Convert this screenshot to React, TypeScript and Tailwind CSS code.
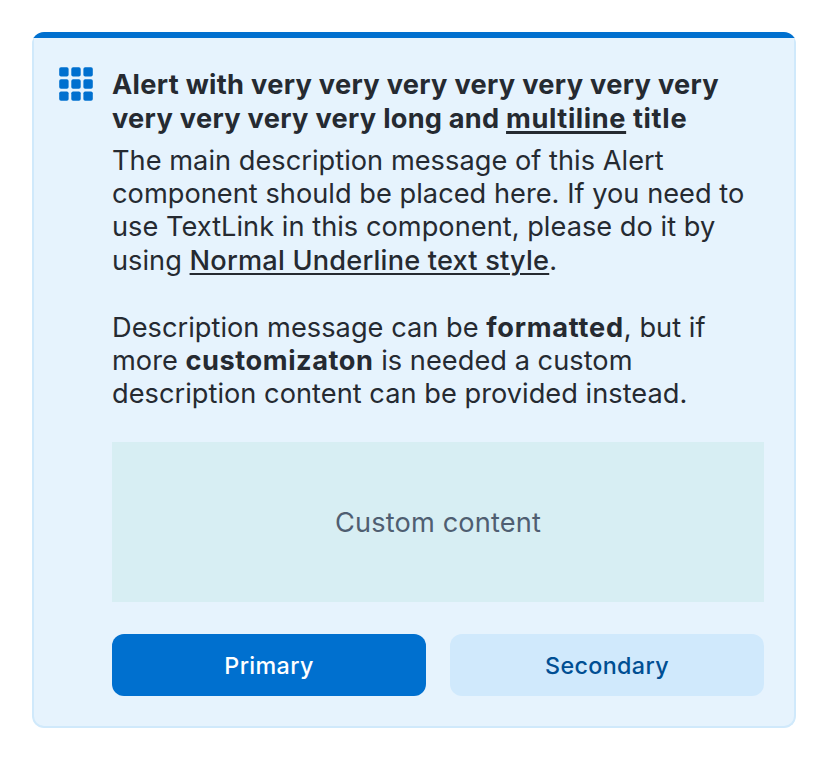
const cells = [0.2, 12.3, 24.4];

function GridIcon() {
  return (
    <svg className="mt-[29px] h-[34px] w-[34px] shrink-0" viewBox="0 0 34 34" fill="#0070cf">
      {cells.map((y) => cells.map((x) => <rect key={`${x}-${y}`} x={x} y={y} width="9.4" height="9.4" rx="1.8" />))}
    </svg>
  );
}

export default function App() {
  return (
    <main className="h-[761px] w-[828px] bg-white p-8 font-['Inter',sans-serif] text-[#252a31]">
      <section className="flex h-[696px] w-[764px] flex-col overflow-hidden rounded-xl bg-[#e6f3fd]">
        <div className="h-1.5 shrink-0 bg-[#0070cf]" />
        <div className="flex flex-1 rounded-b-xl border-x-2 border-b-2 border-[#d0e9fb] pl-[25px]">
          <GridIcon />
          <div className="ml-[19px] w-[652px] pt-[30px]">
            <h1 className="text-[27.2px] font-bold leading-[34px] tracking-[0.3px] whitespace-nowrap">
              <span className="block">Alert with very very very very very very very</span>
              <span className="block">very very very very <span className="tracking-[0.2px]">long and</span> <a className="tracking-[0.6px] underline decoration-[3px] underline-offset-[3px]">multiline</a> <span className="tracking-[0.7px]">title</span></span>
            </h1>
            <div className="mt-[7.5px] text-[27.2px] leading-[33.4px] tracking-[0.03px] whitespace-nowrap">
              <p>The main description message of this Alert<br />component should be placed here. If you need to<br />use TextLink in this component, please do it by<br />using <a className="font-medium tracking-[0.19px] underline decoration-2 underline-offset-[3px]">Normal Underline text style</a>.</p>
              <p className="mt-[33.4px]">Description message can be <b className="tracking-[0.75px]">formatted</b>, but if<br />more <b className="tracking-[0.55px]">customizaton</b> is needed a custom<br />description content can be provided instead.</p>
            </div>
            <div className="mt-[31.3px] flex h-40 items-center justify-center bg-[#d7eef3] pt-0.5 text-[27.2px] tracking-[0.13px] text-[#4f5e71]">Custom content</div>
            <div className="mt-8 grid grid-cols-2 gap-6 text-[23.3px] font-medium tracking-[0.35px]">
              <button className="h-[62px] rounded-xl bg-[#0070cf] pt-0.5 text-white">Primary</button>
              <button className="h-[62px] rounded-xl bg-[#d0e9fc] pt-0.5 text-[#004f93]">Secondary</button>
            </div>
          </div>
        </div>
      </section>
    </main>
  );
}
